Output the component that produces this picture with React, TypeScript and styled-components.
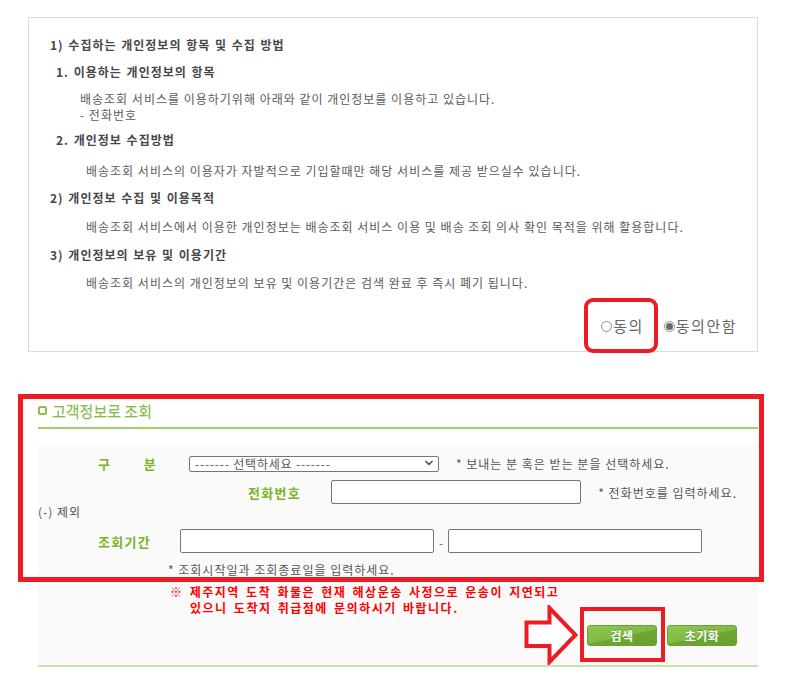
import React from 'react';
import styled, { createGlobalStyle } from 'styled-components';
import { ChevronDown } from 'lucide-react';

const GlobalStyle = createGlobalStyle`
  html, body {
    margin: 0;
    padding: 0;
    background: #fff;
  }
  body {
    font-family: "Noto Sans CJK KR", "Noto Sans", sans-serif;
    font-size: 12px;
    color: #555;
  }
  * {
    box-sizing: border-box;
  }
`;

const Page = styled.div`
  padding: 17px 0 0 28px;
`;

const TermsBox = styled.div`
  width: 730px;
  border: 1px solid #dcdcdc;
  padding: 19px 20px 15px 0;
`;

const Heading = styled.div<{ $indent: number; $mt?: number }>`
  margin: ${p => p.$mt ?? 0}px 0 0 ${p => p.$indent}px;
  font-weight: 700;
  font-size: 12px;
  line-height: 16px;
  letter-spacing: 1px;
  word-spacing: 1px;
  color: #474747;
  white-space: nowrap;
`;

const Paragraph = styled.div<{ $indent: number; $mt?: number }>`
  margin: ${p => p.$mt ?? 0}px 0 0 ${p => p.$indent}px;
  font-size: 12px;
  line-height: 16px;
  letter-spacing: 1px;
  color: #5a5a5a;
  white-space: nowrap;
`;

const ConsentRow = styled.div`
  display: flex;
  justify-content: flex-end;
  align-items: center;
  gap: 20px;
  height: 20px;
  margin-top: 25px;
`;

const RadioOption = styled.label`
  position: relative;
  display: inline-flex;
  align-items: center;
  gap: 1px;
  font-size: 15px;
  line-height: 20px;
  letter-spacing: 1.5px;
  color: #666;
`;

const RadioMark = styled.span<{ $checked?: boolean }>`
  width: 11px;
  height: 11px;
  border-radius: 50%;
  border: 1px solid #8c8c8c;
  background: #fff;
  display: grid;
  place-items: center;

  &::after {
    content: '';
    width: 7px;
    height: 7px;
    border-radius: 50%;
    background: ${p => (p.$checked ? '#6a6a6a' : 'transparent')};
  }
`;

const RoundMark = styled.span`
  position: absolute;
  left: -17px;
  top: -18px;
  width: 74px;
  height: 55px;
  border: 4px solid #ed1c24;
  border-radius: 9px;
  pointer-events: none;
`;

const Search = styled.section`
  position: relative;
  width: 720px;
  margin: 48px 0 0 10px;
`;

const FrameMark = styled.div`
  position: absolute;
  left: -20px;
  top: -6px;
  width: 746px;
  height: 188px;
  border: 5px solid #ed1c24;
  pointer-events: none;
  z-index: 2;
`;

const TitleRow = styled.h2`
  display: flex;
  align-items: center;
  gap: 5px;
  height: 20px;
  margin: 0;
  font-size: 15px;
  font-weight: 400;
  color: #85be47;
  text-shadow: 0 1px 0 rgba(90, 130, 40, 0.25);
`;

const TitleBullet = styled.span`
  width: 9px;
  height: 9px;
  border: 2.5px solid #8cc152;
  border-radius: 2px;
  background: #fff;
`;

const TitleRule = styled.div`
  margin-top: 7px;
  height: 2px;
  background: #9fd06a;
`;

const FormArea = styled.div`
  margin-top: 16px;
  background: #fafafa;
  padding: 6px 21px 19px 0;
`;

const FieldRow = styled.div<{ $left: number; $mt?: number }>`
  display: flex;
  align-items: center;
  height: 24px;
  margin-top: ${p => p.$mt ?? 0}px;
  padding-left: ${p => p.$left}px;
`;

const FieldLabel = styled.span<{ $width: number; $gap: number }>`
  display: flex;
  justify-content: space-between;
  width: ${p => p.$width}px;
  margin-right: ${p => p.$gap}px;
  font-size: 13px;
  font-weight: 700;
  letter-spacing: 1.3px;
  color: #78b41e;
  white-space: nowrap;
`;

const SelectWrap = styled.div`
  position: relative;
  width: 250px;
  height: 16px;

  svg {
    position: absolute;
    right: 4px;
    top: 2px;
    pointer-events: none;
  }
`;

const Select = styled.select`
  appearance: none;
  width: 100%;
  height: 16px;
  margin: 0;
  padding: 0 20px 0 5px;
  border: 1px solid #767676;
  border-radius: 2px;
  background: #fff;
  font-family: "Noto Sans CJK KR", "Noto Sans", sans-serif;
  font-size: 12px;
  line-height: 14px;
  letter-spacing: 0.8px;
  color: #555;
`;

const Hint = styled.span`
  margin-left: 17px;
  font-size: 12px;
  letter-spacing: 1px;
  color: #555;
  white-space: nowrap;
`;

const TextInput = styled.input`
  width: 254px;
  height: 24px;
  margin: 0;
  border: 1px solid #767676;
  border-radius: 2px;
  background: #fff;
`;

const RangeDash = styled.span`
  width: 14px;
  text-align: center;
  color: #666;
  padding-top: 3px;
`;

const NoteLine = styled.div<{ $left: number; $mt?: number }>`
  margin-top: ${p => p.$mt ?? 0}px;
  padding-left: ${p => p.$left}px;
  line-height: 16px;
  letter-spacing: 1px;
  color: #555;
  white-space: nowrap;
`;

const Warning = styled.p`
  margin: 6px 0 0;
  padding-left: 132px;
  font-size: 12px;
  font-weight: 700;
  line-height: 16px;
  letter-spacing: 1.5px;
  word-spacing: 2px;
  color: #f00;
  white-space: nowrap;

  span {
    display: block;
    padding-left: 20px;
  }
`;

const ButtonRow = styled.div`
  display: flex;
  justify-content: flex-end;
  gap: 10px;
  margin-top: 9px;
`;

const Annotated = styled.div`
  position: relative;
`;

const ActionButton = styled.button`
  display: block;
  width: 70px;
  height: 21px;
  padding: 0;
  border: 1px solid #6c9f38;
  border-radius: 3px;
  background: linear-gradient(168deg, #8fc753 0%, #80ba43 52%, #6ea833 54%, #66a02d 100%);
  color: #fff;
  font-family: "Noto Sans CJK KR", "Noto Sans", sans-serif;
  font-size: 12px;
  font-weight: 700;
  line-height: 19px;
  letter-spacing: 0.5px;
  text-shadow: 0 -1px 0 rgba(40, 80, 10, 0.35);
`;

const ButtonMark = styled.span`
  position: absolute;
  left: -7px;
  top: -18px;
  width: 85px;
  height: 55px;
  border: 4px solid #ed1c24;
  pointer-events: none;
`;

const ArrowMark = styled.svg`
  position: absolute;
  left: -63px;
  top: -20px;
  pointer-events: none;
`;

const BottomRule = styled.div`
  height: 2px;
  background: #c6e4a6;
`;

export default function App() {
  return (
    <>
      <GlobalStyle />
      <Page>
        <TermsBox>
          <Heading $indent={21}>1) 수집하는 개인정보의 항목 및 수집 방법</Heading>
          <Heading $indent={27} $mt={11}>1. 이용하는 개인정보의 항목</Heading>
          <Paragraph $indent={51} $mt={11}>
            배송조회 서비스를 이용하기위해 아래와 같이 개인정보를 이용하고 있습니다.
          </Paragraph>
          <Paragraph $indent={51}>- 전화번호</Paragraph>
          <Heading $indent={27} $mt={9}>2. 개인정보 수집방법</Heading>
          <Paragraph $indent={57} $mt={15}>
            배송조회 서비스의 이용자가 자발적으로 기입할때만 해당 서비스를 제공 받으실수 있습니다.
          </Paragraph>
          <Heading $indent={21} $mt={11}>2) 개인정보 수집 및 이용목적</Heading>
          <Paragraph $indent={57} $mt={13}>
            배송조회 서비스에서 이용한 개인정보는 배송조회 서비스 이용 및 배송 조회 의사 확인 목적을 위해 활용합니다.
          </Paragraph>
          <Heading $indent={21} $mt={12}>3) 개인정보의 보유 및 이용기간</Heading>
          <Paragraph $indent={57} $mt={12}>
            배송조회 서비스의 개인정보의 보유 및 이용기간은 검색 완료 후 즉시 폐기 됩니다.
          </Paragraph>
          <ConsentRow>
            <RadioOption>
              <RadioMark />
              동의
              <RoundMark />
            </RadioOption>
            <RadioOption>
              <RadioMark $checked />
              동의안함
            </RadioOption>
          </ConsentRow>
        </TermsBox>

        <Search>
          <FrameMark />
          <TitleRow>
            <TitleBullet />
            고객정보로 조회
          </TitleRow>
          <TitleRule />
          <FormArea>
            <FieldRow $left={60}>
              <FieldLabel $width={59} $gap={32}>
                <span>구</span>
                <span>분</span>
              </FieldLabel>
              <SelectWrap>
                <Select defaultValue="">
                  <option value="">------- 선택하세요 -------</option>
                  <option value="send">보내는 분</option>
                  <option value="recv">받는 분</option>
                </Select>
                <ChevronDown size={12} strokeWidth={3.5} color="#555" />
              </SelectWrap>
              <Hint>* 보내는 분 혹은 받는 분을 선택하세요.</Hint>
            </FieldRow>
            <FieldRow $left={210} $mt={5}>
              <FieldLabel $width={52} $gap={31}>전화번호</FieldLabel>
              <TextInput type="text" />
              <Hint>* 전화번호를 입력하세요.</Hint>
            </FieldRow>
            <NoteLine $left={0}>(-) 제외</NoteLine>
            <FieldRow $left={60} $mt={9}>
              <FieldLabel $width={52} $gap={30}>조회기간</FieldLabel>
              <TextInput type="text" />
              <RangeDash>-</RangeDash>
              <TextInput type="text" />
            </FieldRow>
            <NoteLine $left={130} $mt={9}>* 조회시작일과 조회종료일을 입력하세요.</NoteLine>
            <Warning>
              ※ 제주지역 도착 화물은 현재 해상운송 사정으로 운송이 지연되고
              <span>있으니 도착지 취급점에 문의하시기 바랍니다.</span>
            </Warning>
            <ButtonRow>
              <Annotated>
                <ArrowMark width="54" height="60" viewBox="0 0 54 60">
                  <polygon
                    points="2.5,17.5 25.5,17.5 25.5,3 51.5,30 25.5,57 25.5,41 2.5,41"
                    fill="#fff"
                    stroke="#ed1c24"
                    strokeWidth="4"
                    strokeLinejoin="miter"
                  />
                </ArrowMark>
                <ActionButton type="button">검색</ActionButton>
                <ButtonMark />
              </Annotated>
              <ActionButton type="button">초기화</ActionButton>
            </ButtonRow>
          </FormArea>
          <BottomRule />
        </Search>
      </Page>
    </>
  );
}
